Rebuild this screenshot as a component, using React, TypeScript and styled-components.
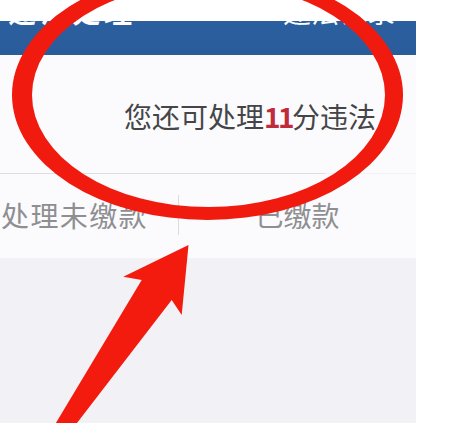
import React from "react";
import styled, { createGlobalStyle } from "styled-components";

const GlobalStyle = createGlobalStyle`
  html, body { margin: 0; padding: 0; background: #ffffff; }
  body { font-family: "Noto Sans CJK SC", "Noto Sans", sans-serif; }
`;

const Page = styled.div`
  width: 458px;
  height: 436px;
  background: #ffffff;
  overflow: hidden;
`;

const Screen = styled.div`
  position: relative;
  width: 416px;
  height: 423px;
  overflow: hidden;
  display: flex;
  flex-direction: column;
  background: #f2f1f6;
`;

const Header = styled.header`
  height: 55px;
  flex: none;
  display: flex;
  justify-content: space-between;
  align-items: flex-start;
  padding: 0 21px 0 8px;
  box-sizing: border-box;
  background: linear-gradient(to bottom, #ffffff 0, #ffffff 21px, #2c5f9f 21px, #2a5c9b 55px);
`;

const HeaderText = styled.span<{ $bold?: boolean }>`
  font-size: 28px;
  line-height: 28px;
  margin-top: -3px;
  color: #ffffff;
  font-weight: ${(p) => (p.$bold ? 700 : 400)};
  letter-spacing: ${(p) => (p.$bold ? "4px" : "0")};
  white-space: nowrap;
`;

const Notice = styled.div`
  height: 118px;
  flex: none;
  display: flex;
  align-items: center;
  justify-content: flex-end;
  padding: 4px 40px 0 0;
  box-sizing: border-box;
  background: #fbfbfd;
  font-size: 28px;
  color: #454548;
  white-space: nowrap;
`;

const Points = styled.span`
  color: #c02b3c;
  font-weight: 700;
  letter-spacing: -2.5px;
`;

const Rule = styled.div`
  height: 1px;
  flex: none;
  margin-right: 91px;
  background: #dedee2;
`;

const Tabs = styled.nav`
  height: 84px;
  flex: none;
  display: grid;
  grid-template-columns: 178px 1px 1fr;
  align-items: center;
  background: #fbfbfd;
  padding-bottom: 2px;
  box-sizing: border-box;
`;

const Tab = styled.div<{ $align: "end" | "center" }>`
  display: flex;
  justify-content: ${(p) => (p.$align === "end" ? "flex-end" : "center")};
  padding-right: ${(p) => (p.$align === "end" ? "30px" : "0")};
  letter-spacing: ${(p) => (p.$align === "end" ? "1.4px" : "0")};
  font-size: 28px;
  line-height: 34px;
  color: #8f8f92;
  white-space: nowrap;
  min-width: 0;
`;

const TabDivider = styled.div`
  width: 1px;
  height: 40px;
  background: #dcdcdf;
`;

const Filler = styled.div`
  flex: 1;
  background: #f2f1f6;
`;

const Annotation = styled.svg`
  position: absolute;
  top: 0;
  left: 0;
  pointer-events: none;
`;

export default function App() {
  return (
    <Page>
      <GlobalStyle />
      <Screen>
        <Header>
          <HeaderText $bold>违法处理</HeaderText>
          <HeaderText>违法记录</HeaderText>
        </Header>
        <Notice>
          您还可处理<Points>11</Points>分违法
        </Notice>
        <Rule />
        <Tabs>
          <Tab $align="end">处理未缴款</Tab>
          <TabDivider />
          <Tab $align="center">已缴款</Tab>
        </Tabs>
        <Filler />
        <Annotation width="416" height="423" viewBox="0 0 416 423">
          <path
            fill="#f11a0f"
            fillRule="evenodd"
            d="M12,95 a195.5,125 0 1,0 391,0 a195.5,125 0 1,0 -391,0 Z M32,95 a176.5,112 0 1,0 353,0 a176.5,112 0 1,0 -353,0 Z"
          />
          <polygon
            fill="#f21b0e"
            points="188.5,245 181.7,315 171.7,300 71.6,430 51.7,430 141.7,280 123.3,276.7"
          />
        </Annotation>
      </Screen>
    </Page>
  );
}
